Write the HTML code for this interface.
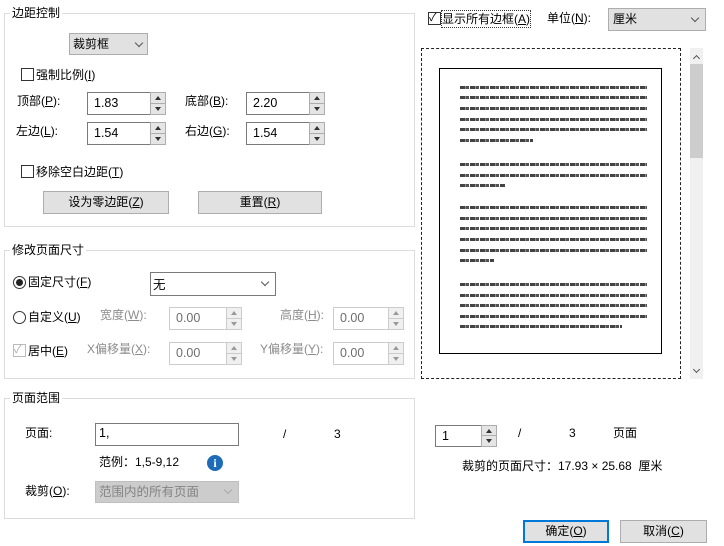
<!DOCTYPE html>
<html><head><meta charset="utf-8"><style>
*{margin:0;padding:0;box-sizing:border-box}
body{width:724px;height:546px;background:#fff;position:relative;overflow:hidden;font-family:"Liberation Sans","Noto Sans CJK SC",sans-serif;font-size:12px;color:#000}
.a{position:absolute;line-height:16px;white-space:nowrap}
.g{position:absolute;border:1px solid #dcdcdc}
.lg{position:absolute;background:#fff;padding:0 2px;line-height:16px}
.cb{position:absolute;width:13px;height:13px;border:1px solid #333;background:#fff}
.in{position:absolute;border:1px solid #7a7a7a;background:#fff;padding-left:6px;line-height:20px;font-size:12.5px}
.in.d{border-color:#ccc;color:#6d6d6d}
.sp{position:absolute;width:16px;border:1px solid #adadad;background:#e5e5e5}
.sp div{height:50%;border-bottom:1px solid #adadad;position:relative}
.sp div:last-child{border-bottom:none}
.sp div:after{content:"";position:absolute;left:4px;top:3px;border-left:3px solid transparent;border-right:3px solid transparent}
.sp .u:after{border-bottom:4px solid #333}
.sp .dn:after{border-top:4px solid #333;top:3px}
.sp.x{border-color:#ccc;background:#f0f0f0}
.sp.x div{border-color:#ccc}
.sp.x .u:after{border-bottom-color:#999}.sp.x .dn:after{border-top-color:#999}
.btn{position:absolute;background:#e1e1e1;border:1px solid #adadad;text-align:center;line-height:20px}
.dis{color:#8c8c8c}
.chev{position:absolute;width:6px;height:6px;border-right:1px solid #555;border-bottom:1px solid #555;transform:rotate(45deg)}
.ln{position:absolute;left:460px;height:3px;background:repeating-linear-gradient(90deg,#222 0 5px,#777 5px 6px,#333 6px 9px,#fff 9px 10px);opacity:.85}
u{text-decoration:underline}
</style></head><body>

<!-- group 1 -->
<div class="g" style="left:4px;top:13px;width:411px;height:214px"></div>
<div class="lg" style="left:10px;top:5px">边距控制</div>
<div class="btn" style="left:69px;top:33px;width:79px;height:22px;text-align:left;padding-left:3px">裁剪框</div>
<div class="chev" style="left:136px;top:40px"></div>
<div class="cb" style="left:21px;top:68px"></div><div class="a" style="left:36px;top:67px">强制比例(<u>I</u>)</div>
<div class="a" style="left:17px;top:93px">顶部(<u>P</u>):</div>
<div class="in" style="left:87px;top:92px;width:64px;height:23px">1.83</div>
<div class="sp" style="left:150px;top:92px;height:23px"><div class="u"></div><div class="dn"></div></div>
<div class="a" style="left:185px;top:93px">底部(<u>B</u>):</div>
<div class="in" style="left:246px;top:92px;width:64px;height:23px">2.20</div>
<div class="sp" style="left:309px;top:92px;height:23px"><div class="u"></div><div class="dn"></div></div>
<div class="a" style="left:16px;top:123px">左边(<u>L</u>):</div>
<div class="in" style="left:87px;top:122px;width:64px;height:23px">1.54</div>
<div class="sp" style="left:150px;top:122px;height:23px"><div class="u"></div><div class="dn"></div></div>
<div class="a" style="left:185px;top:123px">右边(<u>G</u>):</div>
<div class="in" style="left:246px;top:122px;width:64px;height:23px">1.54</div>
<div class="sp" style="left:309px;top:122px;height:23px"><div class="u"></div><div class="dn"></div></div>
<div class="cb" style="left:21px;top:165px"></div><div class="a" style="left:36px;top:164px">移除空白边距(<u>T</u>)</div>
<div class="btn" style="left:43px;top:191px;width:126px;height:23px">设为零边距(<u>Z</u>)</div>
<div class="btn" style="left:198px;top:191px;width:124px;height:23px">重置(<u>R</u>)</div>

<!-- group 2 -->
<div class="g" style="left:4px;top:250px;width:411px;height:129px"></div>
<div class="lg" style="left:10px;top:242px">修改页面尺寸</div>
<div style="position:absolute;left:13px;top:276px;width:13px;height:13px;border:1px solid #333;border-radius:50%"><div style="position:absolute;left:2px;top:2px;width:7px;height:7px;border-radius:50%;background:#222"></div></div>
<div class="a" style="left:28px;top:274px">固定尺寸(<u>F</u>)</div>
<div class="in" style="left:150px;top:272px;width:126px;height:24px;line-height:24px;padding-left:2px">无</div>
<div class="chev" style="left:262px;top:279px"></div>
<div style="position:absolute;left:13px;top:311px;width:13px;height:13px;border:1px solid #333;border-radius:50%"></div>
<div class="a" style="left:28px;top:309px">自定义(<u>U</u>)</div>
<div class="a dis" style="left:100px;top:307px">宽度(<u>W</u>):</div>
<div class="in d" style="left:169px;top:307px;width:58px;height:23px">0.00</div>
<div class="sp x" style="left:226px;top:307px;height:23px"><div class="u"></div><div class="dn"></div></div>
<div class="a dis" style="left:280px;top:307px">高度(<u>H</u>):</div>
<div class="in d" style="left:333px;top:307px;width:56px;height:23px">0.00</div>
<div class="sp x" style="left:388px;top:307px;height:23px"><div class="u"></div><div class="dn"></div></div>
<div class="cb" style="left:13px;top:344px;border-color:#bbb"></div>
<div class="a" style="left:14px;top:342px;color:#aaa;font-size:11px">✓</div>
<div class="a" style="left:28px;top:343px">居中(<u>E</u>)</div>
<div class="a dis" style="left:87px;top:341px">X偏移量(<u>X</u>):</div>
<div class="in d" style="left:169px;top:342px;width:58px;height:23px">0.00</div>
<div class="sp x" style="left:226px;top:342px;height:23px"><div class="u"></div><div class="dn"></div></div>
<div class="a dis" style="left:260px;top:341px">Y偏移量(<u>Y</u>):</div>
<div class="in d" style="left:333px;top:342px;width:56px;height:23px">0.00</div>
<div class="sp x" style="left:388px;top:342px;height:23px"><div class="u"></div><div class="dn"></div></div>

<!-- group 3 -->
<div class="g" style="left:4px;top:398px;width:411px;height:121px"></div>
<div class="lg" style="left:10px;top:390px">页面范围</div>
<div class="a" style="left:25px;top:425px">页面:</div>
<div class="in" style="left:95px;top:423px;width:144px;height:23px;line-height:18px;padding-left:3px">1,</div>
<div class="a" style="left:283px;top:426px">/</div>
<div class="a" style="left:334px;top:426px">3</div>
<div class="a" style="left:99px;top:454px">范例：1,5-9,12</div>
<div style="position:absolute;left:207px;top:455px;width:16px;height:16px;border-radius:50%;background:#1e6cb8;color:#fff;font-weight:bold;font-family:'Liberation Serif',serif;font-size:12px;text-align:center;line-height:16px">i</div>
<div class="a" style="left:25px;top:483px">裁剪(<u>O</u>):</div>
<div style="position:absolute;left:95px;top:481px;width:144px;height:22px;background:#cccccc;border:1px solid #bfbfbf;color:#838383;line-height:20px;padding-left:3px;font-size:12.5px">范围内的所有页面</div>
<div class="chev" style="left:225px;top:487px;border-color:#aaa"></div>

<!-- right -->
<div class="cb" style="left:428px;top:12px"></div>
<div class="a" style="left:429px;top:10px;font-size:11px">✓</div>
<div class="a" style="left:442px;top:11px;outline:1px dotted #333">显示所有边框(<u>A</u>)</div>
<div class="a" style="left:547px;top:10px">单位(<u>N</u>):</div>
<div class="btn" style="left:608px;top:8px;width:98px;height:23px;text-align:left;padding-left:4px">厘米</div>
<div class="chev" style="left:692px;top:15px"></div>

<div style="position:absolute;left:421px;top:48px;width:260px;height:331px;border:1px dashed #222"></div>
<div style="position:absolute;left:439px;top:68px;width:223px;height:286px;border:1px solid #000;background:#fff"></div>
<div class="ln" style="top:86px;width:187px"></div>
<div class="ln" style="top:96px;width:187px"></div>
<div class="ln" style="top:107px;width:187px"></div>
<div class="ln" style="top:118px;width:187px"></div>
<div class="ln" style="top:128px;width:187px"></div>
<div class="ln" style="top:139px;width:73px"></div>
<div class="ln" style="top:163px;width:187px"></div>
<div class="ln" style="top:174px;width:187px"></div>
<div class="ln" style="top:184px;width:45px"></div>
<div class="ln" style="top:206px;width:187px"></div>
<div class="ln" style="top:217px;width:187px"></div>
<div class="ln" style="top:227px;width:187px"></div>
<div class="ln" style="top:238px;width:187px"></div>
<div class="ln" style="top:249px;width:187px"></div>
<div class="ln" style="top:259px;width:34px"></div>
<div class="ln" style="top:283px;width:187px"></div>
<div class="ln" style="top:294px;width:187px"></div>
<div class="ln" style="top:304px;width:187px"></div>
<div class="ln" style="top:315px;width:187px"></div>
<div class="ln" style="top:325px;width:162px"></div>

<div style="position:absolute;left:690px;top:48px;width:13px;height:331px;background:#f0f0f0"></div>
<div style="position:absolute;left:690px;top:64px;width:13px;height:94px;background:#cdcdcd"></div>
<div class="chev" style="left:694px;top:56px;transform:rotate(225deg);width:5px;height:5px"></div>
<div class="chev" style="left:694px;top:367px;width:5px;height:5px"></div>

<div class="in" style="left:435px;top:425px;width:47px;height:22px">1</div>
<div class="sp" style="left:481px;top:425px;height:22px"><div class="u"></div><div class="dn"></div></div>
<div class="a" style="left:518px;top:425px">/</div>
<div class="a" style="left:569px;top:425px">3</div>
<div class="a" style="left:613px;top:425px">页面</div>
<div class="a" style="left:462px;top:458px">裁剪的页面尺寸：17.93 × 25.68&nbsp; 厘米</div>

<div class="btn" style="left:523px;top:520px;width:86px;height:23px;border:2px solid #0078d7;line-height:19px">确定(<u>O</u>)</div>
<div class="btn" style="left:620px;top:520px;width:87px;height:23px">取消(<u>C</u>)</div>
</body></html>
